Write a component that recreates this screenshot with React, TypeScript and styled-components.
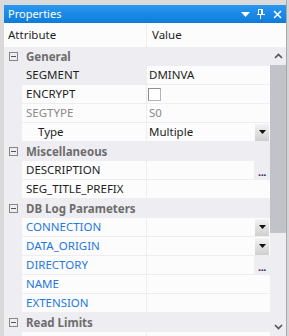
import React from "react";
import styled, { createGlobalStyle, css } from "styled-components";

type Tone = "normal" | "muted" | "link";
type Editor = "text" | "check" | "select" | "ellipsis";

type Prop = {
  name: string;
  value?: string;
  editor?: Editor;
  tone?: Tone;
  indent?: boolean;
  selected?: boolean;
};

type Category = {
  title: string;
  props: Prop[];
};

const categories: Category[] = [
  {
    title: "General",
    props: [
      { name: "SEGMENT", value: "DMINVA", selected: true },
      { name: "ENCRYPT", editor: "check" },
      { name: "SEGTYPE", value: "S0", tone: "muted" },
      { name: "Type", value: "Multiple", editor: "select", indent: true },
    ],
  },
  {
    title: "Miscellaneous",
    props: [
      { name: "DESCRIPTION", editor: "ellipsis" },
      { name: "SEG_TITLE_PREFIX" },
    ],
  },
  {
    title: "DB Log Parameters",
    props: [
      { name: "CONNECTION", editor: "select", tone: "link" },
      { name: "DATA_ORIGIN", editor: "select", tone: "link" },
      { name: "DIRECTORY", editor: "ellipsis", tone: "link" },
      { name: "NAME", tone: "link" },
      { name: "EXTENSION", tone: "link" },
    ],
  },
  {
    title: "Read Limits",
    props: [{ name: "" }],
  },
];

const colors = {
  frame: "#dadada",
  gutter: "#eeeef2",
  cell: "#fcfcfc",
  text: "#1e1e1e",
  muted: "#8a8a8a",
  link: "#1f78e0",
  category: "#6d6d6d",
  thumb: "#c2c3c9",
};

const GlobalStyle = createGlobalStyle`
  html, body {
    margin: 0;
    padding: 0;
    background: ${colors.frame};
  }
  body {
    font-family: "Noto Sans", Lato, sans-serif;
    font-size: 11.5px;
    color: ${colors.text};
  }
`;

const Window = styled.div`
  width: 289px;
  height: 336px;
  box-sizing: border-box;
  padding: 5px 3px 0 4px;
  background: ${colors.frame};
  box-shadow: inset -2px 0 0 #d6d6d6, inset -3px 0 0 #a8a8a8;
  overflow: hidden;
  display: flex;
  flex-direction: column;
`;

const TitleBar = styled.div`
  height: 18px;
  flex: none;
  display: flex;
  align-items: center;
  padding: 0 1px 0 4px;
  background: linear-gradient(#2a97ef, #0d7cda);
  color: #fff;
  font-size: 11px;
`;

const TitleText = styled.span`
  flex: 1;
  line-height: 18px;
`;

const TitleButton = styled.div`
  width: 16px;
  height: 18px;
  display: flex;
  align-items: center;
  justify-content: center;
`;

const Header = styled.div`
  flex: none;
  height: 24px;
  display: grid;
  grid-template-columns: 142px 1px 1fr;
  background: ${colors.cell};
`;

const HeaderCell = styled.div<{ $pad: number }>`
  padding-left: ${(p) => p.$pad}px;
  line-height: 24px;
  color: ${colors.text};
`;

const ColumnLine = styled.div`
  background: ${colors.gutter};
`;

const Body = styled.div`
  flex: 1;
  min-height: 0;
  display: flex;
  overflow: hidden;
`;

const Grid = styled.div`
  width: 266px;
  flex: none;
  display: flex;
  flex-direction: column;
`;

const CategoryRow = styled.div`
  height: 19px;
  flex: none;
  display: flex;
  align-items: center;
  background: ${colors.gutter};
  font-weight: 700;
  color: ${colors.category};
`;

const Expander = styled.div`
  width: 18px;
  height: 19px;
  display: flex;
  align-items: center;
  justify-content: center;
`;

const CategoryLabel = styled.span`
  padding-left: 4px;
  line-height: 19px;
`;

const PropRow = styled.div`
  height: 19px;
  flex: none;
  box-sizing: border-box;
  display: grid;
  grid-template-columns: 18px 124px 1px 123px;
  border-bottom: 1px solid ${colors.gutter};
  background: ${colors.cell};
`;

const Gutter = styled.div`
  background: ${colors.gutter};
`;

const toneColor = (tone?: Tone) =>
  tone === "muted" ? colors.muted : tone === "link" ? colors.link : colors.text;

const NameCell = styled.div<{ $tone?: Tone; $indent?: boolean; $selected?: boolean }>`
  padding-left: ${(p) => (p.$indent ? 16 : 4)}px;
  line-height: 18px;
  white-space: nowrap;
  overflow: hidden;
  color: ${(p) => toneColor(p.$tone)};
  ${(p) =>
    p.$selected &&
    css`
      background: ${colors.gutter};
    `}
`;

const ValueCell = styled.div<{ $tone?: Tone }>`
  display: flex;
  align-items: center;
  padding-left: 2px;
  color: ${(p) => (p.$tone === "muted" ? colors.muted : colors.text)};
`;

const ValueText = styled.span`
  flex: 1;
  line-height: 18px;
  white-space: nowrap;
`;

const Checkbox = styled.div`
  width: 13px;
  height: 13px;
  box-sizing: border-box;
  margin-left: -1px;
  border: 1px solid #8f8f8f;
  border-right-color: #b4b4b4;
  border-bottom-color: #b4b4b4;
  background: #fff;
`;

const DropButton = styled.div`
  width: 14px;
  height: 17px;
  margin-right: 1px;
  display: flex;
  align-items: center;
  justify-content: center;
  background: linear-gradient(#f4f4f4, #cfcfcf);
`;

const EllipsisButton = styled.div`
  width: 16px;
  height: 18px;
  display: flex;
  align-items: flex-end;
  justify-content: center;
  background: ${colors.gutter};
  font-size: 11px;
  font-weight: 700;
  line-height: 14px;
  letter-spacing: -0.5px;
  color: #3a2a55;
`;

const Scrollbar = styled.div`
  width: 16px;
  flex: none;
  display: flex;
  flex-direction: column;
  background: ${colors.gutter};
`;

const ScrollArrow = styled.div`
  height: 18px;
  flex: none;
  display: flex;
  align-items: center;
  justify-content: center;
`;

const Thumb = styled.div`
  height: 168px;
  flex: none;
  background: ${colors.thumb};
`;

const Track = styled.div`
  flex: 1;
`;

const Chevron = ({ up }: { up?: boolean }) => (
  <svg width="9" height="6" viewBox="0 0 9 6">
    <polyline
      points={up ? "1,5 4.5,1.5 8,5" : "1,1 4.5,4.5 8,1"}
      fill="none"
      stroke="#555"
      strokeWidth="1.7"
    />
  </svg>
);

const MinusBox = () => (
  <svg width="9" height="9" viewBox="0 0 9 9">
    <rect x="0.5" y="0.5" width="8" height="8" fill="none" stroke="#858585" />
    <line x1="2" y1="4.5" x2="7" y2="4.5" stroke="#555" />
  </svg>
);

const SmallArrow = () => (
  <svg width="7" height="4" viewBox="0 0 7 4">
    <polygon points="0,0 7,0 3.5,4" fill="#111" />
  </svg>
);

const Value = ({ prop }: { prop: Prop }) => {
  if (prop.editor === "check") return <Checkbox />;
  return (
    <>
      <ValueText>{prop.value}</ValueText>
      {prop.editor === "select" && (
        <DropButton>
          <SmallArrow />
        </DropButton>
      )}
      {prop.editor === "ellipsis" && <EllipsisButton>...</EllipsisButton>}
    </>
  );
};

export default function App() {
  return (
    <>
      <GlobalStyle />
      <Window>
        <TitleBar>
          <TitleText>Properties</TitleText>
          <TitleButton>
            <svg width="9" height="5" viewBox="0 0 9 5">
              <polygon points="0,0 9,0 4.5,5" fill="#fff" />
            </svg>
          </TitleButton>
          <TitleButton>
            <svg width="8" height="10" viewBox="0 0 8 10">
              <rect x="1.5" y="0.5" width="4" height="5" fill="none" stroke="#fff" />
              <rect x="4" y="0" width="2" height="6" fill="#fff" />
              <rect x="0" y="5" width="8" height="1" fill="#fff" />
              <rect x="3" y="6" width="1" height="4" fill="#fff" />
            </svg>
          </TitleButton>
          <TitleButton>
            <svg width="9" height="9" viewBox="0 0 9 9">
              <path d="M1 1L8 8M8 1L1 8" stroke="#fff" strokeWidth="1.6" />
            </svg>
          </TitleButton>
        </TitleBar>

        <Header>
          <HeaderCell $pad={4}>Attribute</HeaderCell>
          <ColumnLine />
          <HeaderCell $pad={5}>Value</HeaderCell>
        </Header>

        <Body>
          <Grid>
            {categories.map((cat) => (
              <React.Fragment key={cat.title}>
                <CategoryRow>
                  <Expander>
                    <MinusBox />
                  </Expander>
                  <CategoryLabel>{cat.title}</CategoryLabel>
                </CategoryRow>
                {cat.props.map((prop, i) => (
                  <PropRow key={i}>
                    <Gutter />
                    <NameCell
                      $tone={prop.tone}
                      $indent={prop.indent}
                      $selected={prop.selected}
                    >
                      {prop.name}
                    </NameCell>
                    <ColumnLine />
                    <ValueCell $tone={prop.tone}>
                      <Value prop={prop} />
                    </ValueCell>
                  </PropRow>
                ))}
              </React.Fragment>
            ))}
          </Grid>
          <Scrollbar>
            <ScrollArrow>
              <Chevron up />
            </ScrollArrow>
            <Thumb />
            <Track />
            <ScrollArrow>
              <Chevron />
            </ScrollArrow>
          </Scrollbar>
        </Body>
      </Window>
    </>
  );
}
